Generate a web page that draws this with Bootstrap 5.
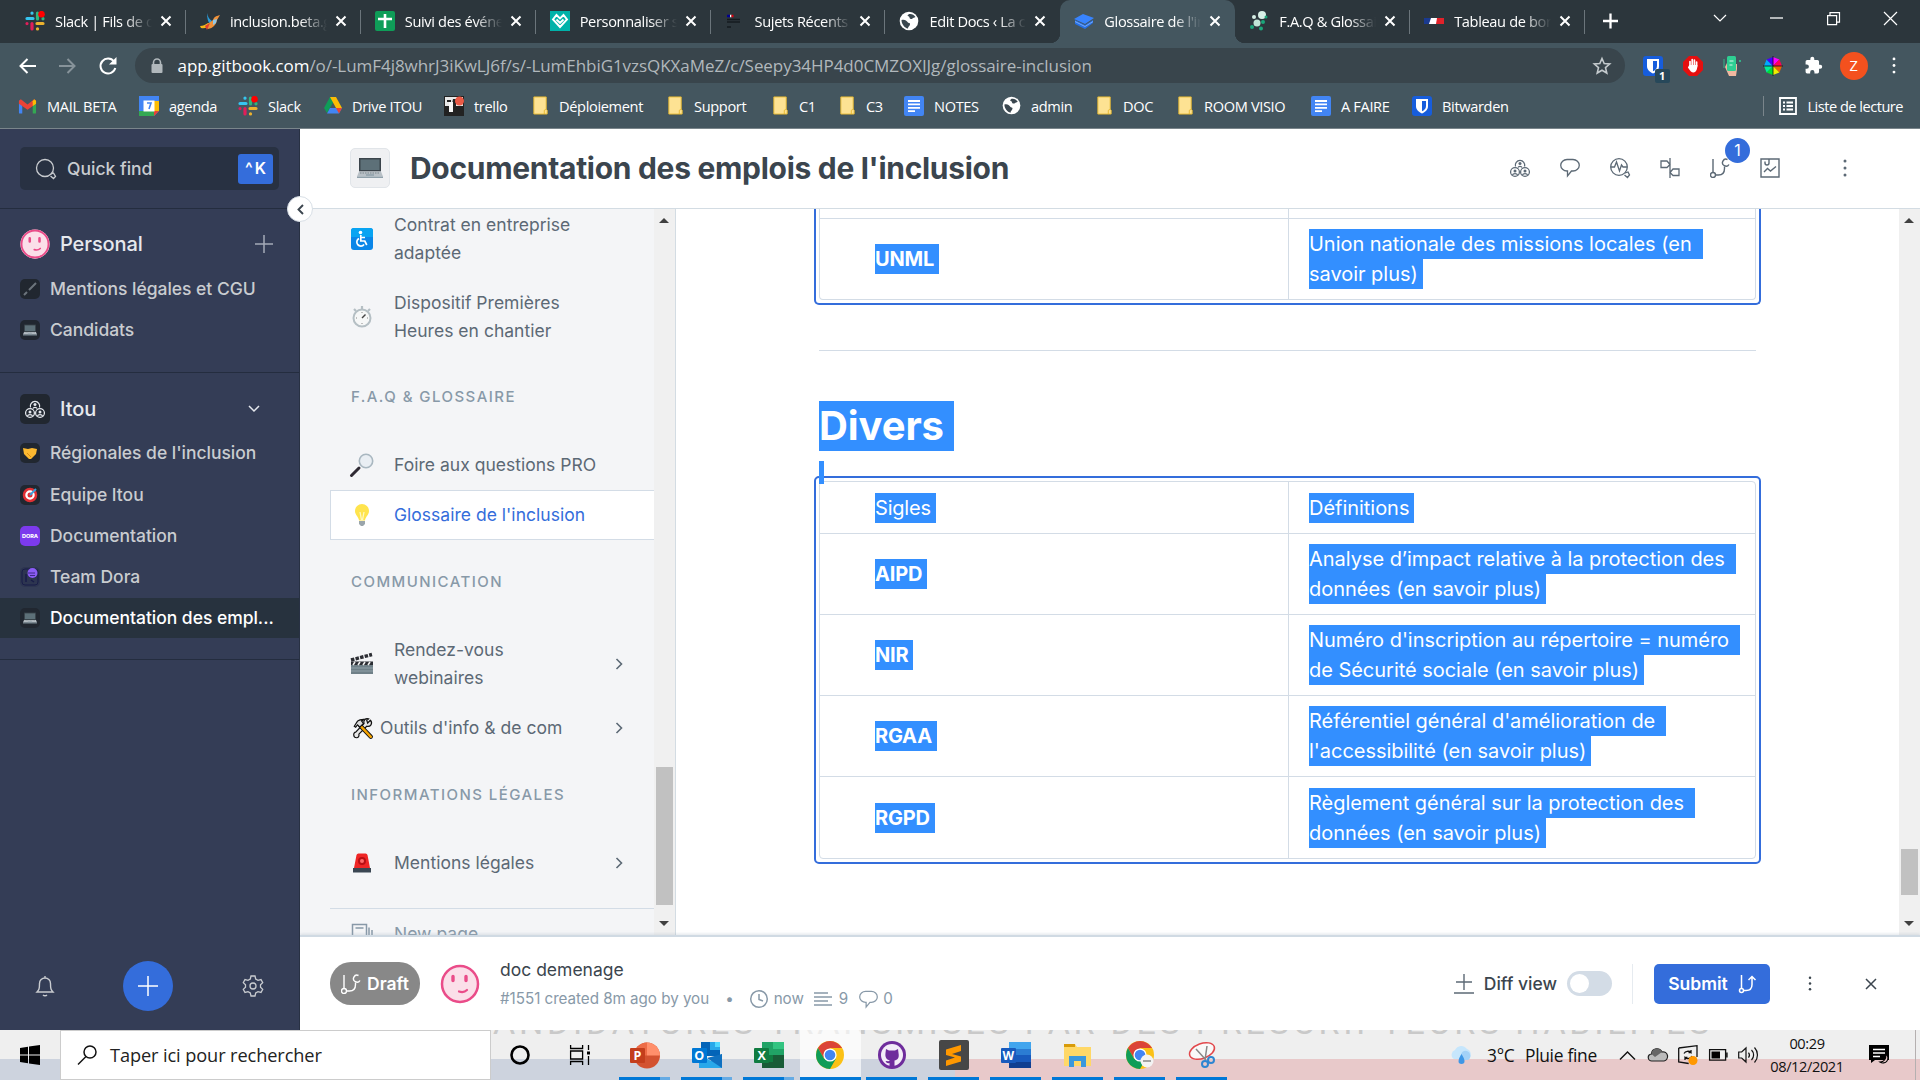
<!DOCTYPE html>
<html lang="fr">
<head>
<meta charset="utf-8">
<title>Glossaire de l'inclusion</title>
<link href="https://cdn.jsdelivr.net/npm/bootstrap@5.3.0/dist/css/bootstrap.min.css" rel="stylesheet">
<style>
body{width:1920px;height:1080px;overflow:hidden;font-family:Inter,"Liberation Sans",sans-serif;font-size:17.5px;line-height:28px;color:#5c6975;background:#fff}
svg{display:block;flex:none;overflow:visible}
.chrome-ui{font-family:"Open Sans","Noto Sans",sans-serif;font-size:14.6px;line-height:20px;color:#fff;letter-spacing:-.35px}
.ln{fill:none;stroke:currentColor;stroke-width:1.5}
/* tab strip */
.tabstrip{height:43px;background:#2c363c;padding-left:11px}
.tab-item{width:174.9px;height:43px;padding:0 14px 2px 14px;position:relative}
.tab-item::after{content:"";position:absolute;right:0;top:10px;width:1px;height:24px;background:#6b757b}
.tab-item.no-sep::after{display:none}
.tab-text{width:98px;margin-left:10px;overflow:hidden;white-space:nowrap;-webkit-mask-image:linear-gradient(90deg,#000 72%,transparent 100%);mask-image:linear-gradient(90deg,#000 72%,transparent 100%)}
.tab-item.current{background:#44565f;border-radius:10px 10px 0 0}
.tab-item.current::before,.tab-item.current::after{content:"";position:absolute;bottom:0;top:auto;width:10px;height:10px}
.tab-item.current::before{left:-10px;background:radial-gradient(circle at 0 0,transparent 10px,#44565f 10.5px)}
.tab-item.current::after{right:-10px;background:radial-gradient(circle at 100% 0,transparent 10px,#44565f 10.5px);z-index:1}
.tab-x{margin-left:8px}
.win-ctl{width:57px;height:36px}
.win-ctl:last-child{margin-right:1px}
/* toolbar */
.toolbar{height:45px;background:#44565f;padding-left:7px}
.nav-ic{width:40.5px}
.omni{width:1490px;height:35px;border-radius:18px;background:#39454c;margin-left:6px;padding:0 14px 0 14px;font-size:17px;letter-spacing:-.05px}
.omni .url{margin-left:13px}
.omni .path{color:#b1b8bc}
.ext{width:40.2px;position:relative}
.ext-badge{position:absolute;left:22px;top:13px;width:15px;height:14px;background:#27485a;border-radius:2px;font-size:11px;line-height:14px;font-weight:700;text-align:center}
.zed{width:28px;height:28px;border-radius:50%;background:#f4511e;text-align:center;line-height:27px}
/* bookmarks */
.marks{height:41px;background:#44565f;border-bottom:1px solid #7a858b;padding-left:18px;padding-bottom:5px;white-space:nowrap}
.bm{gap:10px}
.w121{width:121px}.w99{width:99px}.w86{width:86px}.w120{width:120px}.w88{width:88px}.w135{width:135px}.w105{width:105px}.w67{width:67px}.w65{width:65px}.w98{width:98px}.w94{width:94px}.w81{width:81px}.w134{width:134px}.w101{width:101px}
.reading{margin-right:17px;padding-left:15px;border-left:1px solid #7a858b;height:20px;letter-spacing:-.5px}
/* sidebar */
.side{width:300px;height:901px;background:#343d56;border-right:1px solid #283143;color:#c9ccd0;position:relative;z-index:3;font-weight:500}
.find{width:259px;height:43px;margin:18px 0 0 20px;border-radius:5px;background:#283142;padding:0 6px 0 16px}
.find-text{margin-left:11px}
.kbd-k{width:35px;height:30px;border-radius:3px;background:#346ddb;color:#fff;font-weight:600;font-size:16px;line-height:28px;text-align:center;word-spacing:-2px}
.side-sep{height:1px;background:#242d3f}
.grp{height:30px;padding-left:20px;font-size:20px;color:#e6e9ee;margin:20px 0 9px;letter-spacing:-.1px}
.grp-name{margin-left:10px}
.sp{height:41.3px;padding-left:20px;gap:10px;white-space:nowrap;letter-spacing:-.03px}
.sp.on{background:#27323e;color:#fff;height:40px}
.sq{width:20px;height:20px;border-radius:5px;background:#212730;display:flex;align-items:center;justify-content:center;flex:none}
.sq-lg{width:30px;height:30px}
.sq-dora{background:#7c3aed}
.sq-team{background:#2d3550}
.fold{position:absolute;right:-14px;top:67px;width:26px;height:26px;border-radius:50%;background:#fff;border:1px solid #d8dfe6;color:#3b454e}
.side-foot{padding:0 35px 19px 36px}
.add-btn{width:50px;height:50px;border-radius:50%;background:#346ddb;color:#fff;margin:0 auto}
/* header */
.head{height:80px;border-bottom:1px solid #d3dce3;background:#fff;padding-left:50px;padding-bottom:1px}
.head-tile{width:40px;height:40px;border-radius:5px;background:#eff0f2;border:1px solid #e1e5e9}
.head-title{font-size:30px;font-weight:700;color:#3b454e;letter-spacing:-.3px;margin-left:20px;white-space:nowrap}
.hic{width:50px;position:relative}
.cnt{position:absolute;left:30px;top:-20px;width:25px;height:25px;border-radius:50%;background:#346ddb;color:#fff;text-align:center;font-size:16px;line-height:25px}
/* table of contents */
.toc{width:354px;background:#f4f5f7;padding-left:30px;height:726px;overflow:hidden}
.ti{padding-left:20px;gap:20px;display:flex;align-items:center;letter-spacing:.02px}
.ti>svg.em{width:24px;height:24px}
.th{padding-left:21px;font-size:15px;font-weight:500;letter-spacing:1.45px;color:#8899a8;display:flex;align-items:center}
.h95{height:95px}.h60{height:60px}.h65{height:65px}.h61{height:61px;padding-top:10px}.h50{height:50px}.h83{height:83px}.h82{height:82px}.h46{height:46px}.h88{height:88px}.h48{height:48px}
.ti.tight{gap:6px}
.ti.sel{background:#fff;border:1px solid #d3dce6;border-right:0;padding-left:19px;color:#346ddb}
.ti .go{margin-left:auto;margin-right:31px}
.newp{margin-top:21px;border-top:1px solid #d3dce6;height:50px;color:#8899a8}
.bar{width:21px;background:#f0f0f0;position:relative;flex:none}
.arrow-u,.arrow-d{position:absolute;left:5px;border:5px solid transparent}
.arrow-u{top:4px;border-bottom-color:#404040}.arrow-d{bottom:4px;border-top-color:#404040}
.thumb{position:absolute;left:2px;width:17px;background:#c1c1c1}
/* document */
.doc{width:1224px;border-left:1px solid #d3dce3;height:726px;overflow:hidden;padding-left:138px}
.frame{width:947px;border:2px solid #346ddb;border-radius:5px;padding:3px}
.frame.first{height:96px;border-top:0;border-radius:0 0 5px 5px;padding-top:0}
.tb{border:1px solid #d3dce6;border-radius:4px;font-size:20px;line-height:30px;color:#fff;letter-spacing:-.03px}
.first .tb{border-top:0;border-radius:0 0 4px 4px}
.tr-row{border-top:1px solid #d3dce6;height:81.1px}
.tr-row:first-child{border-top:0;height:51px}
.tr-row:last-child{height:82px}
.first .tr-row:last-child{height:81px}
.tr-cut{height:9px}
.c1{width:469px;padding-left:55px;border-right:1px solid #d3dce6;display:flex;align-items:center;font-weight:700;letter-spacing:-.2px}
.c2{padding-left:20px;display:flex;flex-direction:column;justify-content:center;align-items:flex-start;white-space:nowrap}
.hl{background:#338fff;padding-right:5px;white-space:nowrap}
.hl.sp2{padding-right:11px}
.rule{width:937px;height:1px;background:#d3dce6;margin:45px 0 50px 5px}
.divers{margin-left:5px;width:135px;height:50px;font-size:40px;line-height:50px;font-weight:700;color:#fff;background:#338fff;letter-spacing:-.1px}
.caret{margin:10px 0 -8px 5px;width:5px;height:23px;background:#338fff;position:relative}
/* draft bar */
.foot{height:95px;border-top:2px solid #d0dae3;background:#fff;box-shadow:0 -1px 3px rgba(160,175,190,.35);position:relative;padding-left:30px;white-space:nowrap}
.pill{width:90px;height:43px;border-radius:21px;background:#888;color:#fff;font-weight:600;gap:6px}
.avatar{margin:0 20px}
.doc-name{color:#3b454e;margin-bottom:3px}
.meta{font-size:15.2px;color:#8899a8;line-height:24px;letter-spacing:-.03px}
.meta-dot{margin:0 16px}
.meta-now{margin:0 10px 0 6px}
.meta-n{margin:0 10px 0 7px}
.foot-act{font-weight:500;color:#3b454e}
.vsep{width:1px;height:40px;background:#e6ebf0;margin:0 21px 0 20px}
.tog{width:45px;height:25px;border-radius:13px;background:#d3dce6;padding:3px}
.tog i{display:block;width:19px;height:19px;border-radius:50%;background:#fff}
.subm{width:116px;height:40px;border-radius:5px;background:#346ddb;color:#fff;font-weight:600;gap:11px}
/* taskbar */
.task{height:50px;background:linear-gradient(#efefef 29px,transparent 29px),linear-gradient(90deg,#cdd3de 955px,#e8c9ca 955px);position:relative;color:#111;letter-spacing:0}
.ghost{position:absolute;left:493px;top:0;width:1240px;height:4px;overflow:hidden;font-family:Roboto,sans-serif;font-size:34px;line-height:40px;letter-spacing:3.75px;color:#c9c9c9;white-space:nowrap}
.ghost span{display:block;margin-top:-28px}
.start{width:60px}
.srch{width:431px;height:50px;background:#fff;border:1px solid #ccc;font-size:18.2px;gap:13px;padding-left:16px;letter-spacing:-.1px;color:#222;z-index:1}
.app{width:62px;position:relative;height:50px;display:flex;align-items:center;justify-content:center}
.app svg{position:relative;left:-.5px}
.app::after{content:"";position:absolute;left:5px;right:6px;bottom:0;height:3px;background:#0078d7}
.app.two::after{background:linear-gradient(90deg,#0078d7 41px,#66abe4 41px)}
.app.act{background:rgba(255,255,255,.65);width:61px}
.app.act::after{left:0;right:0}
.tray{position:absolute;left:1449px;top:0;height:50px;font-size:17.4px;letter-spacing:-.3px;white-space:nowrap}
.deg{width:38px;margin-left:13px}.wx{width:94px}
.clock{font-size:14.6px;line-height:23px;width:80px;text-align:center;letter-spacing:-.4px;margin-left:-2px;margin-right:2px}
</style>
<script src="https://cdn.jsdelivr.net/npm/bootstrap@5.3.0/dist/js/bootstrap.bundle.min.js"></script>
</head>
<body>
<svg width="0" height="0" class="position-absolute">
<symbol id="slack" viewBox="0 0 20 20"><g stroke-width="3.2" stroke-linecap="round"><path d="M2 7.500h6M7 2v.2" stroke="#36c5f0"/><path d="M12.500 2v6M18 7.700v.1" stroke="#2eb67d"/><path d="M12 12.500h6M12.500 18v-.2" stroke="#ecb22e"/><path d="M7 12.500V18M2 12.500v.1" stroke="#e01e5a"/></g><circle cx="16.500" cy="3.200" r="3.300" fill="#f00"/></symbol>
<symbol id="x" viewBox="0 0 12 12"><path d="M1.500 1.500l9 9M10.500 1.500l-9 9" stroke="#fff" stroke-width="2"/></symbol>
<symbol id="globe" viewBox="0 0 20 20"><circle cx="10" cy="10" r="9.300" fill="#fff"/><path d="M2.500 9c3-1 5 .5 6 2s3 .5 2.500 2.500-2 2-2 4C5.500 17 2.500 13 2.500 9zM10 3c2.500-.5 5 .5 6.500 3-1.500 1-2 .5-3 1.500s-3 .5-3-1-2-1-2-2z" fill="#3a474f"/></symbol>
<symbol id="folder" viewBox="0 0 16 20"><path d="M1 1h13v13l1 1v4H1z" fill="#fde293" stroke="#e8b931"/><path d="M12 19v-4l2-1" fill="none" stroke="#e8b931"/></symbol>
<symbol id="gdoc" viewBox="0 0 20 20"><rect width="20" height="20" rx="2" fill="#4285f4"/><path d="M4 5h12M4 8.400h12M4 11.800h12M4 15.200h7" stroke="#fff" stroke-width="1.800"/></symbol>
<symbol id="bw" viewBox="0 0 20 20"><rect width="20" height="20" rx="3" fill="#175ddc"/><path d="M4 3h12v7c0 4-3 6-6 7.500-3-1.500-6-3.500-6-7.500z" fill="#fff"/><path d="M10 5h4v5c0 3-2 4.200-4 5.300z" fill="#175ddc"/></symbol>
<symbol id="pc" viewBox="0 0 26 22"><rect x="2" y="1" width="22" height="13.500" fill="#3b444b"/><rect x="3.500" y="2.500" width="19" height="10.500" fill="#5d7078"/><path d="M2 14.500h22l2 5H0z" fill="#b8c0c6"/><path d="M3 16h20" stroke="#7c868d" stroke-dasharray="1.500 1"/><path d="M9 18h8M0 20.300h26" stroke="#8fa0aa" stroke-width="1.500"/></symbol>
<symbol id="face" viewBox="0 0 40 40"><circle cx="20" cy="20" r="19.500" fill="#fff"/><circle cx="20" cy="20" r="18" fill="#fbdfe9" stroke="#ea4c89" stroke-width="2.500"/><path d="M13 12.500v4M26 12.500v4" stroke="#ea4c89" stroke-width="3.400" stroke-linecap="round"/><path d="M19 27.500c3 1 6 .5 8-1.500" fill="none" stroke="#ea4c89" stroke-width="2.200" stroke-linecap="round"/></symbol>
<symbol id="users" viewBox="0 0 20 20"><g fill="none" stroke="currentColor" stroke-width="1.250"><path d="M5.500 8.500A4.700 4.700 0 1 1 14.500 8.500"/><circle cx="5" cy="14" r="4.400"/><circle cx="15" cy="14" r="4.400"/><path d="M2.500 17c.5-2 4.500-2 5 0M12.500 17c.5-2 4.500-2 5 0M8 9.500c.5-1.500 3.500-1.500 4 0"/></g><g fill="currentColor"><circle cx="10" cy="5.500" r="1.500"/><circle cx="5" cy="13" r="1.500"/><circle cx="15" cy="13" r="1.500"/></g></symbol>
<symbol id="dots" viewBox="0 0 4 18"><g fill="currentColor"><circle cx="2" cy="2" r="1.500"/><circle cx="2" cy="9" r="1.500"/><circle cx="2" cy="16" r="1.500"/></g></symbol>
<symbol id="branch" viewBox="0 0 20 20"><g fill="none" stroke="currentColor" stroke-width="1.400"><path d="M3 1v13.500M5.500 17h3c4 0 6-2.500 6-6.500V8.500"/><circle cx="3" cy="17" r="2.500"/><path d="M17.500 1.500a3.500 3.500 0 1 0 1.500 5"/></g></symbol>
<symbol id="bubble" viewBox="0 0 20 20"><path d="M7 1.500h6a6 5.500 0 0 1 0 11.500h-1.500L7.500 18v-5H7a6 5.500 0 0 1 0-11.500z" fill="none" stroke="currentColor" stroke-width="1.300"/></symbol>
<symbol id="right" viewBox="0 0 8 12"><path d="M1.500 1l5 5-5 5" fill="none" stroke="currentColor" stroke-width="1.600"/></symbol>
<symbol id="chr" viewBox="0 0 28 28"><circle cx="14" cy="14" r="14" fill="#fbc116"/><path d="M1.900 7A14 14 0 0 1 26.100 7H14L8 17.500z" fill="#db4437"/><path d="M1.900 7A14 14 0 0 0 14 28l6-10.500H8z" fill="#0f9d58"/><circle cx="14" cy="14" r="6.600" fill="#fff"/><circle cx="14" cy="14" r="5.300" fill="#4285f4"/></symbol>
</svg>

<!-- browser -->
<div class="chrome-ui">
<div class="tabstrip d-flex">
 <div class="tab-item d-flex align-items-center"><svg width="20" height="20"><use href="#slack"/></svg><div class="tab-text">Slack | Fils de d</div><svg class="tab-x" width="12" height="12"><use href="#x"/></svg></div>
 <div class="tab-item d-flex align-items-center"><svg width="20" height="20" viewBox="0 0 20 20"><path d="M0 15c3 0 5-1 8-3l3 1c-3 3-6 5-10 4z" fill="#f7b819"/><path d="M7 2c1 4 2 6 5 8l-2 3c-2-2-3-6-3-11z" fill="#2a9bd8"/><path d="M20 4l-3 1c-1 0-3 1-4 4l-8 6 3 3c5-1 8-4 9-9z" fill="#f0923a"/><path d="M13 9l4-1-1 4-3 2z" fill="#8ec7e8"/><path d="M5 15l5-3-3 7z" fill="#e2402c"/></svg><div class="tab-text">inclusion.beta.g</div><svg class="tab-x" width="12" height="12"><use href="#x"/></svg></div>
 <div class="tab-item d-flex align-items-center"><svg width="20" height="20" viewBox="0 0 20 20"><rect width="20" height="20" rx="2" fill="#0f9d58"/><path d="M10 3v14M3 8h14" stroke="#fff" stroke-width="2.600"/></svg><div class="tab-text">Suivi des événe</div><svg class="tab-x" width="12" height="12"><use href="#x"/></svg></div>
 <div class="tab-item d-flex align-items-center"><svg width="20" height="20" viewBox="0 0 20 20"><rect width="20" height="20" fill="#00b2a9"/><path d="M10 16L3 8.500 6.500 4 10 7.500 13.500 4 17 8.500zM6.500 8.500L10 12l3.500-3.500" fill="none" stroke="#fff" stroke-width="1.900"/></svg><div class="tab-text">Personnaliser s</div><svg class="tab-x" width="12" height="12"><use href="#x"/></svg></div>
 <div class="tab-item d-flex align-items-center"><svg width="20" height="20" viewBox="0 0 20 20"><path d="M2 5h3" stroke="#000091" stroke-width="2.500"/><path d="M5 5h1.500" stroke="#fff" stroke-width="2.500"/><path d="M6.500 5h2" stroke="#e1000f" stroke-width="2.500"/><path d="M2 8.500h13M2 11h13M2 16h4" stroke="#151b1f" stroke-width="1.500"/></svg><div class="tab-text">Sujets Récents</div><svg class="tab-x" width="12" height="12"><use href="#x"/></svg></div>
 <div class="tab-item no-sep d-flex align-items-center"><svg width="20" height="20"><use href="#globe"/></svg><div class="tab-text">Edit Docs ‹ La c</div><svg class="tab-x" width="12" height="12"><use href="#x"/></svg></div>
 <div class="tab-item current d-flex align-items-center"><svg width="20" height="20" viewBox="0 0 20 20"><path d="M0 8l9-5 11 4-9 6z" fill="#3884ff"/><path d="M1 9v4l10 5 8-6V9l-8 5z" fill="#2470e8"/><path d="M1 10.500l10 5 8-5" stroke="#fff" stroke-width=".8" fill="none" opacity=".5"/></svg><div class="tab-text">Glossaire de l'in</div><svg class="tab-x" width="12" height="12"><use href="#x"/></svg></div>
 <div class="tab-item d-flex align-items-center"><svg width="20" height="20" viewBox="0 0 20 20"><circle cx="13" cy="4" r="4" fill="#d7efe6"/><circle cx="5" cy="6" r="2" fill="#d7efe6"/><circle cx="8" cy="12" r="3.500" fill="#bfe5d6"/><circle cx="14" cy="11" r="2" fill="#1ba67a"/><circle cx="3" cy="16" r="2" fill="#1ba67a"/><circle cx="12" cy="17.500" r="2" fill="#1ba67a"/><circle cx="17" cy="6" r="1.500" fill="#1ba67a"/></svg><div class="tab-text">F.A.Q &amp; Glossai</div><svg class="tab-x" width="12" height="12"><use href="#x"/></svg></div>
 <div class="tab-item d-flex align-items-center"><svg width="20" height="20" viewBox="0 0 20 20"><path d="M0 7h7v6H0z" fill="#1a3a8f"/><path d="M7 7h6v6H5z" fill="#fff"/><path d="M13 7h7v6h-8z" fill="#e1222a"/></svg><div class="tab-text">Tableau de bor</div><svg class="tab-x" width="12" height="12"><use href="#x"/></svg></div>
 <svg class="ms-3 me-auto" style="margin-top:13px" width="20" height="16" viewBox="0 0 20 16"><path d="M9.500 .500v15M2 8h15" stroke="#fff" stroke-width="2.300"/></svg>
 <div class="win-ctl d-flex align-items-center justify-content-center"><svg width="14" height="8"><path d="M1 1l6 6 6-6" fill="none" stroke="#fff" stroke-width="1.200"/></svg></div>
 <div class="win-ctl d-flex align-items-center justify-content-center"><svg width="13" height="2"><path d="M0 1h13" stroke="#fff" stroke-width="1.300"/></svg></div>
 <div class="win-ctl d-flex align-items-center justify-content-center"><svg width="13" height="13"><path d="M.600 3.600h9v9h-9zM3 3V.600h9.500v9.500H10" fill="none" stroke="#fff" stroke-width="1.200"/></svg></div>
 <div class="win-ctl d-flex align-items-center justify-content-center"><svg width="13" height="13"><path d="M0 0l13 13M13 0L0 13" stroke="#fff" stroke-width="1.200"/></svg></div>
</div>
<div class="toolbar d-flex align-items-center">
 <div class="nav-ic d-flex justify-content-center"><svg width="17" height="16" viewBox="0 0 17 16"><path d="M17 8H2M8.500 1L1.500 8l7 7" fill="none" stroke="#fff" stroke-width="2"/></svg></div>
 <div class="nav-ic d-flex justify-content-center"><svg width="17" height="16" viewBox="0 0 17 16"><path d="M0 8h15M8.500 1l7 7-7 7" fill="none" stroke="#87939a" stroke-width="2"/></svg></div>
 <div class="nav-ic d-flex justify-content-center"><svg width="18" height="18" viewBox="0 0 18 18"><path d="M15 4.500A7.500 7.500 0 1 0 16.300 11" fill="none" stroke="#fff" stroke-width="2"/><path d="M17.500 0v7.500H10z" fill="#fff"/></svg></div>
 <div class="omni d-flex align-items-center text-nowrap"><svg width="16" height="16" viewBox="0 0 16 16"><path d="M4.500 7V4.500a3.500 3.500 0 0 1 7 0V7" fill="none" stroke="#b1b8bc" stroke-width="1.600"/><rect x="2.500" y="6" width="11" height="9" rx="1" fill="#b1b8bc"/></svg><div class="url flex-grow-1">app.gitbook.com<span class="path">/o/-LumF4j8whrJ3iKwLJ6f/s/-LumEhbiG1vzsQKXaMeZ/c/Seepy34HP4d0CMZOXIJg/glossaire-inclusion</span></div><svg width="18" height="18" viewBox="0 0 18 18"><path d="M9 1.500l2.200 5 5.500.500-4.200 3.600 1.300 5.400L9 13.200 4.200 16l1.300-5.400L1.300 7l5.500-.500z" fill="none" stroke="#c4cacd" stroke-width="1.600"/></svg></div>
 <div class="ext d-flex justify-content-center ms-2"><svg width="20" height="20"><use href="#bw"/></svg><div class="ext-badge">1</div></div>
 <div class="ext d-flex justify-content-center"><svg width="20" height="20" viewBox="0 0 20 20"><path d="M6 0h8l6 6v8l-6 6H6l-6-6V6z" fill="#e60f0f"/><path d="M7 10V5.500M9.200 9V3.500M11.400 9V4M13.600 10V6" stroke="#fff" stroke-width="1.700" stroke-linecap="round"/><path d="M6.200 9h8.200c0 4-1 7-4 7.500-2 0-3.500-2-5.500-5z" fill="#fff"/></svg></div>
 <div class="ext d-flex justify-content-center"><svg width="20" height="20" viewBox="0 0 20 20"><path d="M2 11l2-4 2 1h8v5l-1 7H6z" fill="#f2b8a0"/><rect x="4" y="0" width="9" height="15" rx="1.500" fill="#2fcf93"/><path d="M6.500 5h4M6.500 9h3" stroke="#d8f7ea"/><path d="M1 3v9" stroke="#2fcf93" stroke-width=".8"/><circle cx="17" cy="5" r="1" fill="#2fcf93"/></svg></div>
 <div class="ext d-flex justify-content-center"><svg width="20" height="20" viewBox="0 0 20 20"><g transform="translate(10 10)"><path d="M0 0V-9L6.400-6.400z" fill="#f0f"/><path d="M0 0L6.400-6.400 9 0z" fill="#f05"/><path d="M0 0H9L6.400 6.400z" fill="#e60"/><path d="M0 0L6.400 6.400 0 9z" fill="#ee0"/><path d="M0 0V9L-6.400 6.400z" fill="#0d3"/><path d="M0 0L-6.400 6.400-9 0z" fill="#0e9"/><path d="M0 0H-9L-6.400-6.400z" fill="#0af"/><path d="M0 0L-6.400-6.400 0-9z" fill="#40f"/><path d="M0-10v20M-10 0h20" stroke="#111" stroke-width=".8"/></g></svg></div>
 <div class="ext d-flex justify-content-center"><svg width="19" height="19" viewBox="0 0 24 24"><path d="M20.500 11H19V7a2 2 0 0 0-2-2h-4V3.500a2.500 2.500 0 0 0-5 0V5H4a2 2 0 0 0-2 2v3.800h1.500a2.700 2.700 0 0 1 0 5.400H2V20a2 2 0 0 0 2 2h3.800v-1.500a2.700 2.700 0 0 1 5.400 0V22H17a2 2 0 0 0 2-2v-4h1.500a2.500 2.500 0 0 0 0-5z" fill="#fff"/></svg></div>
 <div class="ext d-flex justify-content-center"><div class="zed">Z</div></div>
 <div class="ext d-flex justify-content-center"><svg width="4" height="17"><use href="#dots"/></svg></div>
</div>
<div class="marks d-flex align-items-center">
 <div class="bm w121 d-flex align-items-center"><svg width="19" height="16" viewBox="0 0 20 16"><path d="M1 2.500h3.500V16H2a1 1 0 0 1-1-1z" fill="#4285f4"/><path d="M15.500 2.500H19V15a1 1 0 0 1-1 1h-2.500z" fill="#34a853"/><path d="M1 2.500L3 1l7 5.500L17 1l2 1.500v3L10 12 1 5.500z" fill="#ea4335"/><path d="M15.500 3L17 1l2 1.500v3l-3.500 2.600z" fill="#fbbc04"/></svg>MAIL BETA</div>
 <div class="bm w99 d-flex align-items-center"><svg width="20" height="20" viewBox="0 0 20 20"><path d="M0 0h20v15l-5 5H0z" fill="#4285f4"/><path d="M15 5h5v10h-5z" fill="#fbbc04"/><path d="M0 15h15v5H0z" fill="#34a853"/><path d="M15 20l5-5h-5z" fill="#ea4335"/><path d="M4.500 4.500h11v11h-11z" fill="#fff"/><path d="M8 7h4l-2 6" fill="none" stroke="#4285f4" stroke-width="1.600"/></svg>agenda</div>
 <div class="bm w86 d-flex align-items-center"><svg width="20" height="20"><use href="#slack"/></svg>Slack</div>
 <div class="bm w120 d-flex align-items-center"><svg width="18" height="17" viewBox="0 0 18 17"><path d="M6 0h6L6 11l-3 5-3-5z" fill="#0f9d58"/><path d="M6 0h6l6 11h-6z" fill="#fbbc04"/><path d="M6 11h12l-3 5.500H3z" fill="#4285f4"/><path d="M12 11h6l-3 5.500z" fill="#ea4335"/></svg>Drive ITOU</div>
 <div class="bm w88 d-flex align-items-center"><svg width="20" height="20" viewBox="0 0 20 20"><rect width="20" height="20" fill="#222"/><path d="M1 1h18v9H1z" fill="#e8e8e8"/><path d="M3 4h4v2H3zM9 3h3v13H8V8z" fill="#222"/><path d="M5 6h4v10H5z" fill="#f7f7f7"/><circle cx="15.500" cy="5" r="4.500" fill="#eb5a46"/></svg>trello</div>
 <div class="bm w135 d-flex align-items-center"><svg width="17" height="19"><use href="#folder"/></svg>Déploiement</div>
 <div class="bm w105 d-flex align-items-center"><svg width="17" height="19"><use href="#folder"/></svg>Support</div>
 <div class="bm w67 d-flex align-items-center"><svg width="17" height="19"><use href="#folder"/></svg>C1</div>
 <div class="bm w65 d-flex align-items-center"><svg width="17" height="19"><use href="#folder"/></svg>C3</div>
 <div class="bm w98 d-flex align-items-center"><svg width="20" height="20"><use href="#gdoc"/></svg>NOTES</div>
 <div class="bm w94 d-flex align-items-center"><svg width="19" height="19"><use href="#globe"/></svg>admin</div>
 <div class="bm w81 d-flex align-items-center"><svg width="17" height="19"><use href="#folder"/></svg>DOC</div>
 <div class="bm w134 d-flex align-items-center"><svg width="17" height="19"><use href="#folder"/></svg>ROOM VISIO</div>
 <div class="bm w101 d-flex align-items-center"><svg width="20" height="20"><use href="#gdoc"/></svg>A FAIRE</div>
 <div class="bm d-flex align-items-center"><svg width="20" height="20"><use href="#bw"/></svg>Bitwarden</div>
 <div class="bm reading d-flex align-items-center ms-auto"><svg width="18" height="18" viewBox="0 0 18 18"><path d="M1 1h16v16H1zM4 5.500h2M7.500 5.500H14M4 9h2M7.500 9H14M4 12.500h2M7.500 12.500H14" fill="none" stroke="#fff" stroke-width="1.800"/></svg>Liste de lecture</div>
</div>
</div>

<div class="d-flex">
<!-- spaces sidebar -->
<div class="side d-flex flex-column flex-shrink-0">
 <div class="find d-flex align-items-center flex-shrink-0"><svg width="20" height="20" viewBox="0 0 20 20"><circle cx="9" cy="9" r="8.500" fill="none" stroke="currentColor" stroke-width="1.300"/><path d="M15 15l2.500-1 2 3.500-2 2-3-2.500" fill="none" stroke="currentColor" stroke-width="1.300"/></svg><span class="find-text me-auto">Quick find</span><div class="kbd-k">^ K</div></div>
 <div class="side-sep" style="margin-top:18px"></div>
 <div class="grp d-flex align-items-center"><svg width="30" height="30"><use href="#face"/></svg><span class="grp-name me-auto">Personal</span><svg width="18" height="18" style="margin-right:26px"><path d="M9 0v18M0 9h18" stroke="#a4abb8" stroke-width="1.500"/></svg></div>
 <div class="sp d-flex align-items-center"><div class="sq"><svg width="14" height="14"><path d="M1 13l3-3M6 8l7-7" stroke="#6c747c" stroke-width="2"/></svg></div>Mentions légales et CGU</div>
 <div class="sp d-flex align-items-center"><div class="sq"><svg width="14" height="12"><use href="#pc"/></svg></div>Candidats</div>
 <div class="side-sep" style="margin-top:21px"></div>
 <div class="grp d-flex align-items-center" style="margin-top:21px"><div class="sq sq-lg"><svg width="20" height="20"><use href="#users"/></svg></div><span class="grp-name me-auto">Itou</span><svg width="12" height="8" style="margin-right:39px"><path d="M1 1l5 5 5-5" class="ln"/></svg></div>
 <div class="sp d-flex align-items-center"><div class="sq"><svg width="14" height="12"><path d="M0 1l5 1 4-1 5 1-1 5-5 5H6L1 7z" fill="#fcb930"/><path d="M4 6l4 4" stroke="#d88a12"/></svg></div>Régionales de l'inclusion</div>
 <div class="sp d-flex align-items-center"><div class="sq"><svg width="14" height="14"><circle cx="7" cy="7" r="6" fill="#fff" stroke="#e02f33" stroke-width="2.500"/><circle cx="7" cy="7" r="2.500" fill="#e02f33"/><path d="M7 7l6-6" stroke="#3aa0d8" stroke-width="2"/></svg></div>Equipe Itou</div>
 <div class="sp d-flex align-items-center"><div class="sq sq-dora"><svg width="16" height="5"><text x="0" y="4.500" font-size="4.500" font-weight="800" fill="#fff" textLength="16" lengthAdjust="spacingAndGlyphs">DORA</text></svg></div>Documentation</div>
 <div class="sp d-flex align-items-center"><div class="sq sq-team"><svg width="18" height="18"><rect x="1" y="1" width="16" height="16" rx="3" fill="none" stroke="#191d48"/><path d="M5 6v8M10 12l3 2" stroke="#191d48" stroke-width="1.500"/><circle cx="11.500" cy="5" r="5" fill="#8b5cf6"/><path d="M7 5h7M9 7.500h5" stroke="#3e2a88"/></svg></div>Team Dora</div>
 <div class="sp on d-flex align-items-center"><div class="sq"><svg width="14" height="12"><use href="#pc"/></svg></div>Documentation des empl...</div>
 <div class="side-sep" style="margin-top:21px"></div>
 <div class="side-foot d-flex align-items-center mt-auto">
  <svg width="18" height="22" viewBox="0 0 18 22"><path d="M1 17h16c-2-2-2.500-3-2.500-8.500a5.500 5.500 0 0 0-11 0C3.500 14 3 15 1 17zM9 1v2M7 20c1 1 3 1 4 0" fill="none" stroke="currentColor" stroke-width="1.400"/></svg>
  <div class="add-btn d-flex align-items-center justify-content-center"><svg width="20" height="20"><path d="M10 0v20M0 10h20" stroke="#fff" stroke-width="1.500"/></svg></div>
  <svg width="22" height="22" viewBox="0 0 22 22" fill="none" stroke="currentColor" stroke-width="1.300"><path d="M9 1h4l.7 3 2.300 1.300 3-.8 1.700 3.200-2.200 2.100v2.400l2.200 2.100-1.700 3.200-3-.8-2.300 1.300-.7 3H9l-.7-3L6 16.700l-3 .8-1.700-3.200 2.200-2.100V9.800L1.300 7.700 3 4.500l3 .8L8.300 4z"/><circle cx="11" cy="11" r="3"/></svg>
 </div>
 <div class="fold d-flex align-items-center justify-content-center"><svg width="7" height="11"><path d="M6 1L1.500 5.500 6 10" fill="none" stroke="currentColor" stroke-width="1.900"/></svg></div>
</div>

<div class="flex-grow-1 d-flex flex-column">
 <div class="head d-flex align-items-center">
  <div class="head-tile d-flex align-items-center justify-content-center"><svg width="26" height="22"><use href="#pc"/></svg></div>
  <div class="head-title">Documentation des emplois de l'inclusion</div>
  <div class="d-flex ms-auto align-items-center">
   <div class="hic d-flex justify-content-center"><svg width="20" height="20"><use href="#users"/></svg></div>
   <div class="hic d-flex justify-content-center"><svg width="20" height="20"><use href="#bubble"/></svg></div>
   <div class="hic d-flex justify-content-center"><svg width="20" height="20" viewBox="0 0 20 20" fill="none" stroke="currentColor" stroke-width="1.300"><circle cx="9" cy="9" r="8.300"/><path d="M1 9h3.500l2-5 3 9 2-6 1.500 2h4M15 15l3-1 1.500 3-2 2.500-3-2.500"/></svg></div>
   <div class="hic d-flex justify-content-center"><svg width="20" height="20" viewBox="0 0 20 20" fill="none" stroke="currentColor" stroke-width="1.300"><path d="M10 0v20M1 3h6l3 3.500-3 3H1zM19 17.500h-6l-3-3 3-3.500h6z"/></svg></div>
   <div class="hic d-flex justify-content-center"><svg width="20" height="20"><use href="#branch"/></svg><div class="cnt">1</div></div>
   <div class="hic d-flex justify-content-center"><svg width="20" height="20" viewBox="0 0 20 20" fill="none" stroke="currentColor" stroke-width="1.400"><path d="M1 1h18v18H1zM4 14l3.500-3.500 3 2.500 5.500-4.500M5 3.500V5a2 2 0 0 0 4 0V1"/></svg></div>
   <svg width="4" height="18" style="margin:0 73px 0 48px"><use href="#dots"/></svg>
  </div>
 </div>
 <div class="d-flex">
  <div class="toc">
   <div class="ti h60"><svg class="em" viewBox="0 0 24 24"><rect x="1" y="1" width="22" height="22" rx="3" fill="#0a86e8"/><path d="M1 4a3 3 0 0 1 3-3h16a3 3 0 0 1 3 3v6H1z" fill="#08a4f2"/><circle cx="10.500" cy="5.500" r="1.800" fill="#fff"/><path d="M10.800 8v6h4l2 4M11 10.500h4M9 11.500a4 4 0 1 0 5 6" fill="none" stroke="#fff" stroke-width="1.700"/></svg><div>Contrat en entreprise<br>adaptée</div></div>
   <div class="ti h95"><svg class="em" viewBox="0 0 24 24"><circle cx="12" cy="13" r="8.500" fill="#f6f7f7" stroke="#b5bfc4" stroke-width="2"/><path d="M12 1v3M4 4l2 2M20 4l-2 2" stroke="#b5bfc4" stroke-width="2.200"/><path d="M12 13l3.500-3.500" stroke="#444" stroke-width="1.500"/><path d="M12 7v1M12 18v1M6 13h1M17 13h1" stroke="#888"/></svg><div>Dispositif Premières<br>Heures en chantier</div></div>
   <div class="th h65">F.A.Q &amp; GLOSSAIRE</div>
   <div class="ti h61"><svg class="em" viewBox="0 0 24 24"><path d="M1.500 22.500L9 15" stroke="#2f2a33" stroke-width="3" stroke-linecap="round"/><circle cx="16" cy="8" r="6.700" fill="#e9eef3" stroke="#a9b7c0" stroke-width="1.600"/></svg><div>Foire aux questions PRO</div></div>
   <div class="ti sel h50"><svg class="em" viewBox="0 0 24 24"><path d="M12 1a7 7 0 0 0-7 7c0 4 3.500 5.500 4 9.500h6c.5-4 4-5.500 4-9.500a7 7 0 0 0-7-7z" fill="#ffe44d"/><path d="M10 9l1.500 8M14 9l-1.500 8" stroke="#fff8c0" stroke-width="1.300"/><path d="M9 18h6v3l-2 2h-2l-2-2z" fill="#9aa5ab"/></svg><div>Glossaire de l'inclusion</div></div>
   <div class="th h83">COMMUNICATION</div>
   <div class="ti h82"><svg class="em" viewBox="0 0 24 24"><path d="M1 10h22v12H1z" fill="#6f8088"/><path d="M1 9.500h22v3.500H1z" fill="#2b2d33"/><path d="M3 13l2-3M8 13l2-3M13 13l2-3M18 13l2-3" stroke="#eee" stroke-width="1.600"/><path d="M1 8l21-5.500" stroke="#2b2d33" stroke-width="3.400" stroke-dasharray="3.500 1.200"/><path d="M1 16h22M1 19h22" stroke="#90a0a8"/></svg><div>Rendez-vous<br>webinaires</div><svg class="go" width="8" height="12"><use href="#right"/></svg></div>
   <div class="ti tight h46"><svg class="em" viewBox="0 0 24 24"><g transform="translate(2 1.500) scale(.92)"><path d="M20 3l-3 3-1-3 2-1.500c-3-1-6 1-5 5L4 16c-3 0-3 6 1 6 2 0 3-2 2.500-4L16 9.500c4 1 7-3 4-6.500z" fill="#e8e8e8" stroke="#111" stroke-width="1.300"/><path d="M9 9L20.500 21" stroke="#111" stroke-width="4.600" stroke-linecap="round"/><path d="M10 10L20.500 21" stroke="#f5a300" stroke-width="2.600" stroke-linecap="round"/><path d="M2.500 9.500L6 4c2-2 5-2 7-2l-2.500 2 2 2.500-4 4L6 8l-2 2.500z" fill="#ddd" stroke="#111" stroke-width="1.300"/></g></svg><div>Outils d'info &amp; de com</div><svg class="go" width="8" height="12"><use href="#right"/></svg></div>
   <div class="th h88">INFORMATIONS LÉGALES</div>
   <div class="ti h48"><svg class="em" viewBox="0 0 24 24"><path d="M6.500 4a2 2 0 0 1 2-1.500h7a2 2 0 0 1 2 1.500l2.500 13H4z" fill="#ef2626"/><circle cx="12" cy="10" r="4" fill="#b80f14"/><circle cx="12" cy="10" r="2" fill="#ff6a6a"/><path d="M3 17h18v4.500H3z" fill="#3a4652"/></svg><div>Mentions légales</div><svg class="go" width="8" height="12"><use href="#right"/></svg></div>
   <div class="ti newp"><svg class="em" viewBox="0 0 24 24" fill="none" stroke="currentColor" stroke-width="1.500"><path d="M2.500 2.500h14v18h-14zM5.500 6h8M19 5.500v15M22 8v12.500"/></svg><div>New page</div></div>
  </div>
  <div class="bar"><i class="arrow-u"></i><i class="thumb" style="top:558px;height:138px"></i><i class="arrow-d"></i></div>
  <div class="doc">
   <div class="frame first"><div class="tb">
    <div class="tr-cut d-flex"><div class="c1"></div></div>
    <div class="tr-row d-flex"><div class="c1"><span class="hl">UNML</span></div><div class="c2"><span class="hl sp2">Union nationale des missions locales (en</span><span class="hl">savoir plus)</span></div></div>
   </div></div>
   <div class="rule"></div>
   <div class="divers">Divers</div>
   <div class="caret"></div>
   <div class="frame"><div class="tb">
    <div class="tr-row d-flex"><div class="c1 fw-normal"><span class="hl">Sigles</span></div><div class="c2"><span class="hl">Définitions</span></div></div>
    <div class="tr-row d-flex"><div class="c1"><span class="hl">AIPD</span></div><div class="c2"><span class="hl sp2">Analyse d’impact relative à la protection des</span><span class="hl">données (en savoir plus)</span></div></div>
    <div class="tr-row d-flex"><div class="c1"><span class="hl">NIR</span></div><div class="c2"><span class="hl sp2">Numéro d'inscription au répertoire = numéro</span><span class="hl">de Sécurité sociale (en savoir plus)</span></div></div>
    <div class="tr-row d-flex"><div class="c1"><span class="hl">RGAA</span></div><div class="c2"><span class="hl sp2">Référentiel général d'amélioration de</span><span class="hl">l'accessibilité (en savoir plus)</span></div></div>
    <div class="tr-row d-flex"><div class="c1"><span class="hl">RGPD</span></div><div class="c2"><span class="hl sp2">Règlement général sur la protection des</span><span class="hl">données (en savoir plus)</span></div></div>
   </div></div>
  </div>
  <div class="bar"><i class="arrow-u"></i><i class="thumb" style="top:640px;height:46px"></i><i class="arrow-d"></i></div>
 </div>
 <div class="foot d-flex align-items-center">
  <div class="pill d-flex align-items-center justify-content-center"><svg width="20" height="20"><use href="#branch"/></svg>Draft</div>
  <svg class="avatar" width="40" height="40"><use href="#face"/></svg>
  <div><div class="doc-name">doc demenage</div>
  <div class="meta d-flex align-items-center">#1551 created 8m ago by you<span class="meta-dot">•</span><svg width="18" height="18" viewBox="0 0 18 18" class="ln"><circle cx="9" cy="9" r="8.300"/><path d="M9 4v5.500l4 1.500"/></svg><span class="meta-now">now</span><svg width="18" height="14" viewBox="0 0 18 14"><path d="M0 1h14M0 5h18M0 9h14M0 13h18" stroke="currentColor" stroke-width="1.500"/></svg><span class="meta-n">9</span><svg width="21" height="19"><use href="#bubble"/></svg><span class="ms-1">0</span></div></div>
  <div class="foot-act d-flex align-items-center ms-auto">
   <svg width="20" height="20"><path d="M10 0v16M2 8h16M0 19h20" fill="none" stroke="#5c6975" stroke-width="1.400"/></svg><span style="margin:0 10px">Diff view</span><div class="tog"><i></i></div>
   <div class="vsep"></div>
   <div class="subm d-flex align-items-center justify-content-center">Submit<svg width="17" height="18" viewBox="0 0 17 18"><path d="M2.500 0v13M5 15.500h2c4 0 6-2 6-6V2M9.500 5L13 1.500 16.500 5" class="ln"/><circle cx="2.500" cy="15.500" r="2" class="ln"/></svg></div>
   <svg width="4" height="15" style="margin:0 53px 0 38px"><use href="#dots"/></svg>
   <svg width="12" height="12" style="margin-right:43px"><path d="M1 1l10 10M11 1L1 11" class="ln"/></svg>
  </div>
 </div>
</div>
</div>

<!-- taskbar -->
<div class="chrome-ui task d-flex align-items-center">
 <div class="ghost"><span>ANDIDATURES TRANSMISES PAR DES PRESCRIPTEURS HABILITÉS</span></div>
 <div class="start d-flex justify-content-center"><svg width="20" height="20" viewBox="0 0 20 20"><path d="M0 3l8-1.200V9.500H0zM9 1.600L20 0v9.500H9zM0 10.500h8v7.700L0 17zM9 10.500h11V20L9 18.400z"/></svg></div>
 <div class="srch d-flex align-items-center"><svg width="20" height="20" viewBox="0 0 20 20"><circle cx="13" cy="7" r="6" fill="none" stroke="#111" stroke-width="1.500"/><path d="M9 11.500L1 19.500" stroke="#111" stroke-width="1.500"/></svg>Taper ici pour rechercher</div>
 <svg width="20" height="20" style="margin-left:19px"><circle cx="10" cy="10" r="8.500" fill="none" stroke="#000" stroke-width="2.600"/></svg>
 <svg width="20" height="20" viewBox="0 0 20 20" style="margin:0 24px 0 40px"><path d="M.600 0v3.500h12V0M.600 6h12v8h-12zM.600 20v-3.500h12V20M18.500 0v5M18.500 11v9" fill="none" stroke="#000" stroke-width="1.300"/><path d="M17 6.500h3v3h-3z"/></svg>
 <div class="app two"><svg width="30" height="27" viewBox="0 0 30 27"><circle cx="17" cy="13.500" r="13" fill="#d35230"/><path d="M17 .500a13 13 0 0 1 13 13H17z" fill="#ff8f6b"/><path d="M17 .500a13 13 0 0 0-13 13h13z" fill="#ed6c47"/><rect y="6" width="15" height="15" rx="1" fill="#c43e1c"/><text x="3.500" y="18" font-size="12.500" font-weight="700" fill="#fff">P</text></svg></div>
 <div class="app two"><svg width="30" height="27" viewBox="0 0 30 27"><path d="M9 0h19v14H9z" fill="#0364b8"/><path d="M18 0h10v8H18z" fill="#28a8ea"/><path d="M23 0h5v5h-5z" fill="#50d9ff"/><path d="M7 12l12 7 11-7v14H7z" fill="#28a8ea"/><path d="M30 12v14L15 16" fill="#0f70c0"/><rect y="6" width="15" height="15" rx="1" fill="#0078d4"/><text x="2.200" y="18" font-size="12.500" font-weight="700" fill="#fff">O</text></svg></div>
 <div class="app two"><svg width="30" height="27" viewBox="0 0 30 27"><path d="M8 0h22v26H8z" fill="#185c37"/><path d="M8 0h11v13H8z" fill="#21a366"/><path d="M19 0h11v7H19z" fill="#33c481"/><path d="M19 7h11v6H19z" fill="#21a366"/><path d="M8 13h11v7H8z" fill="#107c41"/><rect y="6" width="15" height="15" rx="1" fill="#107c41"/><text x="3.500" y="18" font-size="12.500" font-weight="700" fill="#fff">X</text></svg></div>
 <div class="app act"><svg width="28" height="28"><use href="#chr"/></svg></div>
 <div class="app"><svg width="28" height="28" viewBox="0 0 28 28"><circle cx="14" cy="14" r="14" fill="#6e2c9c"/><circle cx="14" cy="14" r="11" fill="#f3ecf8"/><path d="M8 8l3 1.500h6L20 8l.5 4c1 5-1 7-4 7.500v5.500h-5v-3c-2 .5-3 0-4-2l3 .3 1.500-1C8 18.500 7 16 7.500 12z" fill="#6e2c9c"/></svg></div>
 <div class="app"><svg width="30" height="30" viewBox="0 0 30 30"><rect width="30" height="30" rx="2" fill="#474747"/><path d="M7 9.500L22 5v6l-9 3 9 2.500v5L7 26v-5.500l9-3-9-2.500z" fill="#ff9800"/></svg></div>
 <div class="app"><svg width="30" height="27" viewBox="0 0 30 27"><path d="M8 0h22v7H8z" fill="#41a5ee"/><path d="M8 7h22v6H8z" fill="#2b7cd3"/><path d="M8 13h22v7H8z" fill="#185abd"/><path d="M8 20h22v6H8z" fill="#103f91"/><rect y="6" width="15" height="15" rx="1" fill="#185abd"/><text x="1.500" y="18" font-size="12" font-weight="700" fill="#fff">W</text></svg></div>
 <div class="app"><svg width="27" height="23" viewBox="0 0 27 23"><path d="M0 0h11l2 3h14v19H0z" fill="#ffd867"/><path d="M0 0h11v3H0z" fill="#d89b0a"/><path d="M5 23v-11h17v11h-5v-6h-7v6z" fill="#3b98dd"/></svg></div>
 <div class="app"><svg width="28" height="28" viewBox="0 0 28 28"><use href="#chr"/><circle cx="21" cy="20" r="6.500" fill="#f3f3f3"/><path d="M17 20h8" stroke="#888" stroke-width="1.500"/></svg></div>
 <div class="app"><svg width="28" height="26" viewBox="0 0 28 26"><ellipse cx="14" cy="9" rx="13" ry="7.500" transform="rotate(-20 14 9)" fill="#fff" fill-opacity=".6" stroke="#e2474b" stroke-width="1.500"/><path d="M8 7l10 11M19 4l-2 14" stroke="#888" stroke-width="1.500"/><circle cx="17" cy="22" r="3" fill="none" stroke="#2e86d1" stroke-width="2"/><circle cx="23" cy="18" r="3" fill="none" stroke="#2e86d1" stroke-width="2"/></svg></div>
 <div class="tray d-flex align-items-center">
  <svg width="25" height="20" viewBox="0 0 25 20"><path d="M5 14a5 5 0 0 1 1-9 7 7 0 0 1 12-1 5.500 5.500 0 0 1 1 10z" fill="#c6e6fc"/><path d="M14 15a5 5 0 0 1 4-9 5 5 0 0 1 1 9z" fill="#a3d2f8"/><path d="M12.500 9c-4 6-4 10 0 10s4-4 0-10z" fill="#3f97e6"/></svg>
  <span class="deg">3°C</span><span class="wx">Pluie fine</span>
  <svg width="17" height="9" style="margin-right:12px"><path d="M1 8.500L8.500 1 16 8.500" fill="none" stroke="#111" stroke-width="1.400"/></svg>
  <svg width="20" height="14" viewBox="0 0 20 14" style="margin-right:10px"><path d="M4 13a3.500 3.500 0 0 1-.5-7A5.500 5.500 0 0 1 14 4a4.500 4.500 0 0 1 2 9z" fill="#bbb" stroke="#222" stroke-width="1.200"/><path d="M3.500 6A5.500 5.500 0 0 1 14 4l-7 5z" fill="#666"/></svg>
  <svg width="20" height="20" viewBox="0 0 20 20" style="margin-right:11px"><path d="M.700 3L19 .700V12M.700 3v14l10 1.500M6 8.500a4.500 4.500 0 0 1 7-1V5M13 7.500h-2.500M14 11a4.500 4.500 0 0 1-7 1.500V15M7 12.500h2.500" fill="none" stroke="#111" stroke-width="1.300"/><circle cx="15" cy="15.500" r="4.500" fill="#ff9800"/></svg>
  <svg width="19" height="12" viewBox="0 0 19 12" style="margin-right:10px"><path d="M.600.600h16v10.500h-16zM18 3.500v5" fill="none" stroke="#111" stroke-width="1.300"/><path d="M2.500 2.500h8.500v7H2.500z"/></svg>
  <svg width="21" height="18" viewBox="0 0 21 18" style="margin-right:10px"><path d="M.700 6h3L8 2v14l-4.300-4H.700zM10.500 6.500a4 4 0 0 1 0 5M13.500 4a7 7 0 0 1 0 10M16.500 1.500a11 11 0 0 1 0 15" fill="none" stroke="#111" stroke-width="1.200"/></svg>
  <div class="clock">00:29<br>08/12/2021</div>
  <svg width="21" height="20" viewBox="0 0 21 20" style="margin-left:20px"><path d="M0 0h20v15H6l-4 3v-3H0z" fill="#000"/><path d="M4 4.500h12M4 8h12M4 11.500h7" stroke="#fff" stroke-width="1.300"/><path d="M17 9a4.500 4.500 0 1 1-6 8c4 0 6-3 6-8z" fill="#e8c9ca" stroke="#000" stroke-width="1.200"/></svg>
  <i style="width:1px;height:50px;background:#b5b0b0;margin-left:25px"></i>
 </div>
</div>
</body>
</html>
